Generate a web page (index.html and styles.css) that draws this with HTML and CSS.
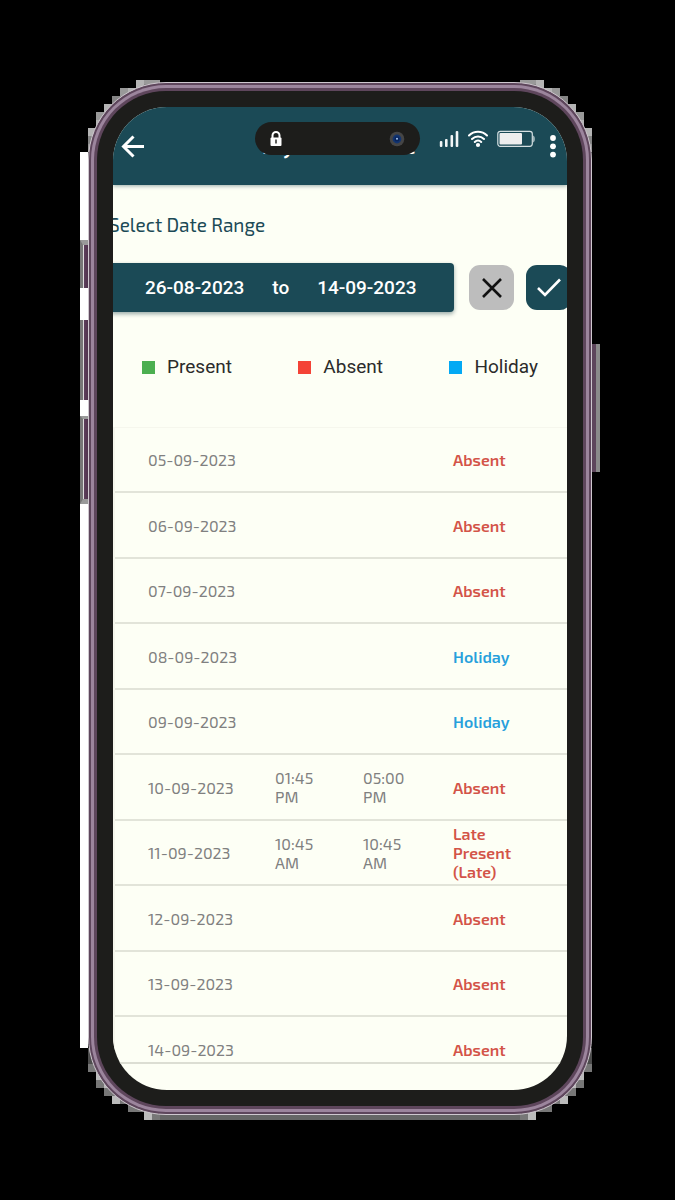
FILE: index.html
```html
<!DOCTYPE html>
<html lang="en">
<head>
<meta charset="utf-8">
<meta name="viewport" content="width=device-width, initial-scale=1">
<title>My Attendance</title>
<link rel="stylesheet" href="styles.css">
</head>
<body>
<svg class="defs" aria-hidden="true">
  <symbol id="halo-top" viewBox="0 0 80 80">
    <path fill="#858585" d="M80 0H56V8H40V16H32V24H24V32H16V48H8V72H80Z"/>
    <path fill="#b4b4b4" d="M56 0h8v8h-8zM48 8h8v8h-8zM24 24h8v8h-8zM16 40h8v8h-8zM8 48h8v8h-8z"/>
    <path fill="#999" d="M64 0h16v4h-16zM40 8h8v8h-8zM16 32h8v8h-8zM8 64h8v8h-8z"/>
  </symbol>
  <symbol id="halo-bottom" viewBox="0 0 80 80">
    <path fill="#777" d="M8 8V32H16V48H24V56H32V64H48V72H64V80H80V8Z"/>
    <path fill="#bbb" d="M64 72h8v8h-8zM24 40h8v8h-8zM16 32h8v8h-8zM32 56h8v8h-8z"/>
    <path fill="#4c4c4c" d="M8 8h8v16h-8z"/>
  </symbol>
</svg>
<div class="shell">
  <div class="side-glow"></div>
  <div class="bottom-glow"></div>
  <svg class="halo halo-tl" aria-hidden="true"><use href="#halo-top"/></svg>
  <svg class="halo halo-tr" aria-hidden="true"><use href="#halo-top"/></svg>
  <svg class="halo halo-bl" aria-hidden="true"><use href="#halo-bottom"/></svg>
  <svg class="halo halo-br" aria-hidden="true"><use href="#halo-bottom"/></svg>
  <div class="key key-mute"></div>
  <div class="key key-up"></div>
  <div class="key key-down"></div>
  <div class="key key-power"></div>

  <div class="frame"><div class="frame-light"><div class="frame-inner"><div class="bezel">
    <main class="screen">
      <header class="appbar">
        <button class="icon-button" type="button" aria-label="Back">
          <svg width="24" height="24" viewBox="0 0 24 24" fill="none" stroke="#fff" stroke-width="3"><path d="M23 12.500H3M12.500 2.500l-10 10 10 10"/></svg>
        </button>
        <h1 class="title">My Attendance</h1>
        <button class="icon-button menu-button" type="button" aria-label="More options">
          <svg width="8" height="24" viewBox="0 0 8 24" fill="#fff"><circle cx="4" cy="4" r="2.900"/><circle cx="4" cy="12.300" r="2.900"/><circle cx="4" cy="20.600" r="2.900"/></svg>
        </button>
      </header>

      <div class="island">
        <svg width="14" height="16" viewBox="0 0 14 16"><path fill="none" stroke="#fff" stroke-width="2" d="M3.500 7V4.500a3.500 3.500 0 0 1 7 0V7"/><rect x="1.500" y="6.500" width="11" height="8.500" rx="1" fill="#fff"/><path stroke="#1d1d1b" stroke-width="1.400" d="M7 8.500v4"/></svg>
        <svg width="16" height="16" viewBox="0 0 16 16"><circle cx="8" cy="8" r="7.300" fill="#454545"/><circle cx="8" cy="8" r="4.400" fill="#12346f"/><circle cx="8" cy="8" r="2.500" fill="#08245c"/><circle cx="8" cy="7.700" r="1" fill="#a9c8ee"/></svg>
      </div>
      <div class="status">
        <svg width="20" height="18" viewBox="0 0 20 18" fill="#f2f6f6"><rect x=".8" y="11" width="2.600" height="6" rx="1"/><rect x="6" y="9" width="2.600" height="8" rx="1"/><rect x="11.500" y="5" width="2.600" height="12" rx="1"/><rect x="16.700" y="1" width="2.600" height="16" rx="1"/></svg>
        <svg width="20" height="18" viewBox="0 0 20 18" fill="none" stroke="#fff" stroke-width="2" stroke-linecap="round"><path d="M1 5.500c5-5 13-5 18 0M4 9c3.500-3.500 8.500-3.500 12 0M6.800 12c2-2 4.400-2 6.400 0"/><circle cx="10" cy="15" r="1.100" fill="#fff"/></svg>
        <svg width="38" height="18" viewBox="0 0 38 18"><rect x=".8" y="1.300" width="34.500" height="15" rx="2.500" fill="none" stroke="#d5e0e2" stroke-width="1.200"/><rect x="2.500" y="3" width="22.500" height="11.600" rx="1" fill="#eee"/><path fill="#d5e0e2" d="M36.300 5.500c1.800.5 1.800 6.500 0 7z"/></svg>
      </div>

      <section class="filter">
        <h2 class="filter-label">Select Date Range</h2>
        <div class="filter-row">
          <div class="range">
            <button class="date" type="button">26-08-2023</button>
            <span>to</span>
            <button class="date" type="button">14-09-2023</button>
          </div>
          <button class="action action-clear" type="button" aria-label="Clear">
            <svg width="24" height="24" viewBox="0 0 24 24" fill="none" stroke="#111" stroke-width="2.600"><path d="m3 3 18 18M21 3 3 21"/></svg>
          </button>
          <button class="action action-apply" type="button" aria-label="Apply">
            <svg width="26" height="24" viewBox="0 0 26 24" fill="none" stroke="#fff" stroke-width="2.600"><path d="m2 12 7 7L24 3.500"/></svg>
          </button>
        </div>
      </section>

      <ul class="legend">
        <li class="present">Present</li>
        <li class="absent">Absent</li>
        <li class="holiday">Holiday</li>
      </ul>

      <div class="records">
        <table class="table" aria-label="Attendance">
          <colgroup><col class="col-date"><col class="col-in"><col class="col-out"><col></colgroup>
          <tbody>
            <tr><td>05-09-2023</td><td></td><td></td><td class="is-absent">Absent</td></tr>
            <tr><td>06-09-2023</td><td></td><td></td><td class="is-absent">Absent</td></tr>
            <tr><td>07-09-2023</td><td></td><td></td><td class="is-absent">Absent</td></tr>
            <tr><td>08-09-2023</td><td></td><td></td><td class="is-holiday">Holiday</td></tr>
            <tr><td>09-09-2023</td><td></td><td></td><td class="is-holiday">Holiday</td></tr>
            <tr><td>10-09-2023</td><td>01:45 PM</td><td>05:00 PM</td><td class="is-absent">Absent</td></tr>
            <tr><td>11-09-2023</td><td>10:45 AM</td><td>10:45 AM</td><td class="is-absent">Late Present (Late)</td></tr>
            <tr><td>12-09-2023</td><td></td><td></td><td class="is-absent">Absent</td></tr>
            <tr><td>13-09-2023</td><td></td><td></td><td class="is-absent">Absent</td></tr>
            <tr><td>14-09-2023</td><td></td><td></td><td class="is-absent">Absent</td></tr>
          </tbody>
        </table>
      </div>
    </main>
  </div></div></div></div>
</div>
</body>
</html>
```

FILE: styles.css
```css
* { box-sizing: border-box; }
body {
  margin: 0;
  padding: 80px 75px 80px 80px;
  background: #000;
  font-family: "Exo 2", "Noto Sans", sans-serif;
}
button { border: 0; padding: 0; background: none; color: inherit; font: inherit; cursor: pointer; }
svg { display: block; }
.defs { position: absolute; width: 0; height: 0; }

/* Phone body */
.shell { position: relative; padding: 2px 8px 5px; }
.frame {
  position: relative;
  padding: 2px;
  border: 1px solid #cfc8cf;
  border-radius: 78px;
  background: #5e465c;
}
.frame-light { padding: 3px; border-radius: 75px; background: #9c859d; }
.frame-inner { padding: 3px; border-radius: 72px; background: #5e465c; }
.bezel { padding: 16px; border-radius: 69px; background: #1d1d1b; }
.screen {
  position: relative;
  overflow: hidden;
  padding-bottom: 26px;
  border-radius: 54px;
  background: #fdfff5;
}
.halo { position: absolute; width: 80px; height: 80px; }
.halo-tl { left: 0; top: 0; }
.halo-tr { right: 0; top: 0; transform: scaleX(-1); }
.halo-bl { left: 0; bottom: 0; }
.halo-br { right: 0; bottom: 0; transform: scaleX(-1); }
.side-glow { position: absolute; left: 0; top: 72px; bottom: 72px; width: 8px; background: #fff; }
.bottom-glow { position: absolute; left: 64px; right: 64px; bottom: 0; height: 8px; background: #666; }
.key {
  position: absolute;
  left: 0;
  width: 9px;
  border-left: 3px solid #777;
  background: linear-gradient(90deg, #ddd 1px, #5e3f5c 1px, #4c304a);
}
.key-mute { top: 160px; height: 48px; border-top: 5px solid #999; }
.key-up { top: 240px; height: 80px; }
.key-down { top: 336px; height: 88px; border-top: 3px solid #999; border-bottom: 5px solid #999; }
.key-power {
  left: auto;
  right: 0;
  top: 264px;
  height: 128px;
  border-left: 0;
  border-right: 4px solid #8b8b8b;
  background: #5e465c;
}

/* App bar */
.appbar {
  display: flex;
  align-items: center;
  justify-content: space-between;
  height: 78px;
  padding: 0 10px 0 8px;
  background: #1b4a56;
  color: #fff;
  box-shadow: 0 1px 4px rgba(0, 40, 50, .4);
}
.title { margin: 0; padding-bottom: 2px; font-size: 22px; line-height: 28px; font-weight: 600; }
.menu-button { display: flex; justify-content: flex-end; width: 24px; }
.island {
  position: absolute;
  top: 15px;
  left: 142px;
  right: 147px;
  height: 33px;
  padding: 0 15px 0 14px;
  display: flex;
  align-items: center;
  justify-content: space-between;
  border-radius: 17px;
  background: #1d1d1b;
}
.status { position: absolute; top: 23px; right: 32px; display: flex; gap: 9px; }

/* Date filter */
.filter { margin: 0 -4px; padding-top: 28px; }
.filter-label { margin: 0 0 26px; color: #1b4a56; font-size: 19px; line-height: 24px; font-weight: 400; }
.filter-row { display: flex; align-items: center; font-family: Roboto, sans-serif; }
.range {
  flex: 1;
  display: flex;
  gap: 28px;
  height: 49px;
  align-items: center;
  padding-left: 36px;
  border-radius: 4px;
  background: #1b4a56;
  color: #fff;
  font-size: 19px;
  font-weight: 500;
  box-shadow: 0 2px 4px rgba(0, 40, 50, .4);
}
.action { display: grid; place-items: center; width: 45px; height: 45px; border-radius: 11px; }
.action-clear { margin: 0 12px 0 15px; background: #bdbdbd; }
.action-apply { background: #1b4a56; }

.legend {
  display: flex;
  justify-content: space-between;
  margin: 0;
  padding: 43px 29px 48px;
  list-style: none;
  color: #2b2b2b;
  font: 19px/24px Roboto, sans-serif;
}
.legend li { display: flex; align-items: center; gap: 12px; }
.legend li::before { content: ""; width: 13px; height: 13px; background: #4caf50; }
.legend .absent::before { background: #f44336; }
.legend .holiday::before { background: #03a9f4; }

/* Attendance list */
.records {
  height: 637px;
  overflow: hidden;
  border-top: 1px solid #f6f7ed;
  border-bottom: 2px solid #dcded3;
  border-left: 2px solid #f5f6ec;
}
.table { width: 100%; table-layout: fixed; border-collapse: separate; border-spacing: 0; color: #808080; font-size: 16px; line-height: 19px; }
.col-date { width: 160px; }
.col-in { width: 88px; }
.col-out { width: 90px; }
.table td { height: 66px; padding: 0 28px 0 0; border-bottom: 2px solid #e2e4d9; }
.table tr:nth-child(odd) td { height: 65px; }
.table td:first-child { padding: 0 0 0 33px; }
.table .is-absent, .table .is-holiday { font-weight: 600; }
.table .is-absent { color: #d35448; }
.table .is-holiday { color: #26a0dc; }
```
